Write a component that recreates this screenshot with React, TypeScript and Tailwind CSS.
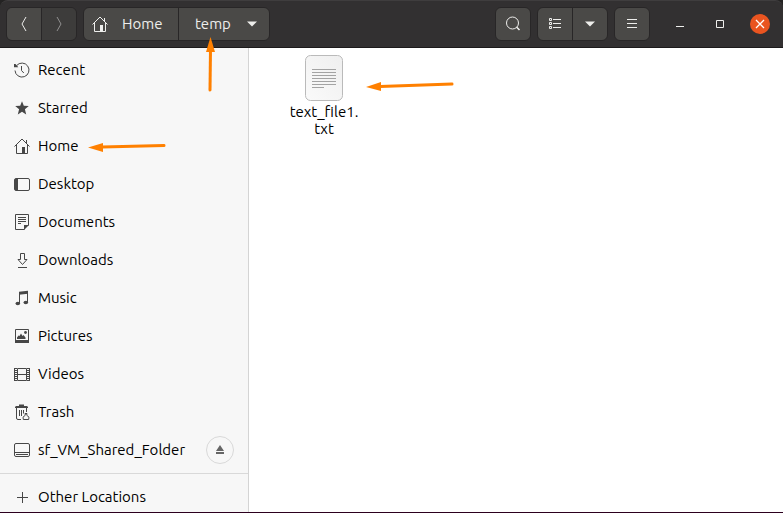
import type { ReactNode } from "react";

interface Place {
  label: string;
  icon: ReactNode;
}

const Icon = ({ children }: { children: ReactNode }) => (
  <svg width="16" height="16" viewBox="0 0 16 16" fill="none" stroke="currentColor" className="shrink-0 overflow-visible" aria-hidden="true">
    {children}
  </svg>
);

const HomeIcon = () => (
  <Icon>
    <path d="M.5 8.5 8 1l7.5 7.5M2.5 7v8.5H8M13.5 7v8.5H11M12.5 2v3.5" />
    <path d="M8 9h3v7H8z" fill="currentColor" stroke="none" />
  </Icon>
);

const Caret = () => (
  <svg width="10" height="6" viewBox="0 0 10 6" fill="currentColor" aria-hidden="true">
    <path d="M0 .5h10L5 5.5z" />
  </svg>
);

const places: Place[] = [
  {
    label: "Recent",
    icon: (
      <Icon>
        <path d="M2.6 3.6A7 7 0 1 1 1 8.5" />
        <path d="M0 2h1.5l2.8 3.2H0z" fill="currentColor" stroke="none" />
        <path d="M7.5 4v4.5L9.8 11" />
      </Icon>
    ),
  },
  {
    label: "Starred",
    icon: (
      <Icon>
        <path d="m8 1.2 1.8 4.6 5 .3-3.9 3.2 1.3 5.2L8 11.7l-4.2 2.8 1.3-5.2-3.9-3.2 5-.3z" fill="currentColor" stroke="none" />
      </Icon>
    ),
  },
  { label: "Home", icon: <HomeIcon /> },
  {
    label: "Desktop",
    icon: (
      <Icon>
        <rect x=".5" y="2.5" width="15" height="12" rx="1.5" />
        <path d="M1 3h3v11H1z" fill="currentColor" stroke="none" />
      </Icon>
    ),
  },
  {
    label: "Documents",
    icon: (
      <Icon>
        <path d="M10.5 15.5h-9V.5h13v11" />
        <path d="M10 11h5l-5 5z" fill="currentColor" stroke="none" />
        <path d="M4 3.5h8M4 5.5h8M4 7.5h8M4 9.5h3" />
      </Icon>
    ),
  },
  {
    label: "Downloads",
    icon: (
      <Icon>
        <path d="M6.5 1.5h4v6H13l-4.5 5L4 7.5h2.5zM4 15.5h9" />
      </Icon>
    ),
  },
  {
    label: "Music",
    icon: (
      <Icon>
        <path d="M5 1.8 14 .8v3L5 4.8z" fill="currentColor" stroke="none" />
        <path d="M5.5 3v10M13.5 2v10" />
        <ellipse cx="3.8" cy="13.5" rx="2.3" ry="1.8" fill="currentColor" stroke="none" />
        <ellipse cx="11.8" cy="12.5" rx="2.3" ry="1.8" fill="currentColor" stroke="none" />
      </Icon>
    ),
  },
  {
    label: "Pictures",
    icon: (
      <Icon>
        <path d="M1.5 1.5h13v13h-13z" />
        <path d="M1 12h14v3H1zM3 11V9.5l1.5-2 1 .5L7 5.5 8.5 8l1-1 2 2.5V11z" fill="currentColor" stroke="none" />
        <circle cx="11.5" cy="4.5" r="1.4" fill="currentColor" stroke="none" />
      </Icon>
    ),
  },
  {
    label: "Videos",
    icon: (
      <Icon>
        <path d="M3.5 2.5h9v12h-9zM3.5 8.5h9" />
        <path d="M.5 2v13M15.5 2v13" />
        <path d="M2 2v13M14 2v13" strokeWidth="2" strokeDasharray="1 1" />
      </Icon>
    ),
  },
  {
    label: "Trash",
    icon: (
      <Icon>
        <path d="M1 4V3l1-1h3V.5h5V2h3l1 1v1z" fill="currentColor" stroke="none" />
        <path d="M2.5 4v10q0 1.5 1.5 1.5h3M12.5 4v4M5.5 6v6M7.5 6v6M9.5 6v3.5" />
        <path d="M11 9.5h2l-.3 1.7 2.3 2-.3 2.3H9.3L9 13.2l2.3-2z" />
      </Icon>
    ),
  },
];

const navIcons = {
  back: <path d="m10 1-4 7 4 7" />,
  forward: <path d="m6 1 4 7-4 7" />,
};

export default function App() {
  return (
    <div className="flex h-screen flex-col overflow-hidden border-b border-[#2c001e] bg-[#242323] font-['Ubuntu','Noto_Sans',sans-serif] text-[15px] leading-5 text-black">
      {/* Header bar */}
      <header className="relative z-10 flex h-12 shrink-0 items-center rounded-t-lg border-y border-t-[#3f3d3e] border-b-[#1c1a1b] bg-[#323031] px-1.5 text-[#eeeeec]">
        <div className="flex h-[34px] overflow-hidden rounded-md border border-[#282627]">
          <button aria-label="Back" className="flex w-[34px] items-center justify-center bg-[#4a4947]">
            <Icon>{navIcons.back}</Icon>
          </button>
          <button aria-label="Forward" className="flex w-[35px] items-center justify-center border-l border-[#282627] bg-[#3d3c3b] text-[#919090]">
            <Icon>{navIcons.forward}</Icon>
          </button>
        </div>

        <nav aria-label="Path" className="ml-1.5 flex h-[34px] rounded-md border border-[#282627] bg-[#4a4947]">
          <button className="flex w-[94px] items-center gap-3.5 pl-2">
            <HomeIcon />
            Home
          </button>
          <button className="relative flex w-[91px] items-center gap-4 border-l border-[#282627] pl-4">
            temp
            <Caret />
            <svg width="12" height="56" viewBox="0 0 12 56" className="absolute left-[25px] top-[29px]" aria-hidden="true">
              <path d="M6.5 12 6 53" stroke="#ff8000" strokeWidth="3" strokeLinecap="round" />
              <path d="M6.5 0 11 15H2z" fill="#ff8000" />
            </svg>
          </button>
        </nav>

        <div className="ml-auto flex items-center gap-1.5">
          <button aria-label="Search" className="flex h-[34px] w-9 items-center justify-center rounded-md border border-[#282627] bg-[#4a4947]">
            <Icon>
              <circle cx="7.5" cy="7" r="6" />
              <path d="m11.5 11 3 3" strokeWidth="1.6" />
            </Icon>
          </button>
          <div className="flex h-[34px] overflow-hidden rounded-md border border-[#282627] bg-[#4a4947]">
            <button aria-label="List view" className="flex w-[34px] items-center justify-center">
              <Icon>
                <path d="M2.5 2.5h2v2h-2zM2.5 6.5h2v2h-2zM2.5 10.5h2v2h-2zM6 3.5h8M6 7.5h8M6 11.5h8" />
              </Icon>
            </button>
            <button aria-label="View options" className="flex w-[35px] items-center justify-center border-l border-[#282627]">
              <Caret />
            </button>
          </div>
          <button aria-label="Menu" className="flex h-[34px] w-9 items-center justify-center rounded-md border border-[#282627] bg-[#4a4947]">
            <Icon>
              <path d="M3 3.5h10M3 7.5h10M3 11.5h10" />
            </Icon>
          </button>
        </div>

        <div className="ml-5 mr-[7px] flex items-center gap-5">
          <button aria-label="Minimize" className="flex size-5 items-center justify-center">
            <Icon>
              <path d="M4 10.5h8" />
            </Icon>
          </button>
          <button aria-label="Maximize" className="flex size-5 items-center justify-center">
            <Icon>
              <path d="M4.5 4.5h7v7h-7z" />
            </Icon>
          </button>
          <button aria-label="Close" className="flex size-5 items-center justify-center rounded-full bg-[#e95420] text-white">
            <Icon>
              <path d="m4 4 8 8M12 4l-8 8" strokeWidth="1.3" />
            </Icon>
          </button>
        </div>
      </header>

      <div className="flex min-h-0 flex-1">
        {/* Places */}
        <aside className="w-[249px] shrink-0 overflow-hidden border-r border-[#d4d4d4] bg-[#f7f7f7] pt-[3px]">
          <ul>
            {places.map((place) => (
              <li key={place.label}>
                <a href="#" className="flex h-[38px] items-center gap-2 pl-3.5">
                  <span className="text-[#474747]">{place.icon}</span>
                  {place.label}
                  {place.label === "Home" && (
                    <svg width="80" height="12" viewBox="0 0 80 12" className="ml-0.5" aria-hidden="true">
                      <path d="M14 7 76 5.5" stroke="#ff8000" strokeWidth="3" strokeLinecap="round" />
                      <path d="M0 7.5 15 3v9z" fill="#ff8000" />
                    </svg>
                  )}
                </a>
              </li>
            ))}
            <li className="flex h-[38px] items-center pr-3.5">
              <a href="#" className="flex flex-1 items-center gap-2 pl-3.5">
                <span className="text-[#474747]">
                  <Icon>
                    <rect x=".5" y="1.5" width="15" height="13" rx="1.5" />
                    <path d="M1 10.5h14M2 12.5h12" />
                  </Icon>
                </span>
                sf_VM_Shared_Folder
              </a>
              <button aria-label="Eject" className="flex size-7 items-center justify-center rounded-full border border-[#d9d9d9] text-[#666666]">
                <Icon>
                  <path d="m8 3 4 6H4zM4 10h8v2H4z" fill="currentColor" stroke="none" />
                </Icon>
              </button>
            </li>
          </ul>
          <div className="mt-1 border-t border-[#d9d9d9] pt-1">
            <a href="#" className="flex h-[38px] items-center gap-2 pl-3.5">
              <span className="text-[#474747]">
                <Icon>
                  <path d="M8.5 3v11M3 8.5h11" />
                </Icon>
              </span>
              Other Locations
            </a>
          </div>
        </aside>

        {/* Folder contents */}
        <main className="flex-1 bg-white px-6 pt-[7px]">
          <figure className="relative flex w-[102px] flex-col items-center">
            <svg width="38" height="46" viewBox="0 0 38 46" aria-hidden="true">
              <defs>
                <linearGradient id="paper" x1="0" y1="1" x2="1" y2="0">
                  <stop offset="0" stopColor="#fafafa" />
                  <stop offset="1" stopColor="#efefef" />
                </linearGradient>
              </defs>
              <rect x=".5" y=".5" width="37" height="45" rx="5" fill="url(#paper)" stroke="#bababa" />
              <path d="M7 14.5h24M7 17.5h24M7 20.5h24M7 23.5h24M7 26.5h24M7 29.5h24M7 32.5h12" stroke="#a3a3a3" />
            </svg>
            <figcaption className="mt-0.5 text-center leading-[17px]">
              text_file1.
              <br />
              txt
            </figcaption>
            <svg width="90" height="12" viewBox="0 0 90 12" className="absolute left-[93px] top-[25px]" aria-hidden="true">
              <path d="M14 6.5 86 4" stroke="#ff8000" strokeWidth="3" strokeLinecap="round" />
              <path d="M0 7 15 2v9z" fill="#ff8000" />
            </svg>
          </figure>
        </main>
      </div>
    </div>
  );
}
